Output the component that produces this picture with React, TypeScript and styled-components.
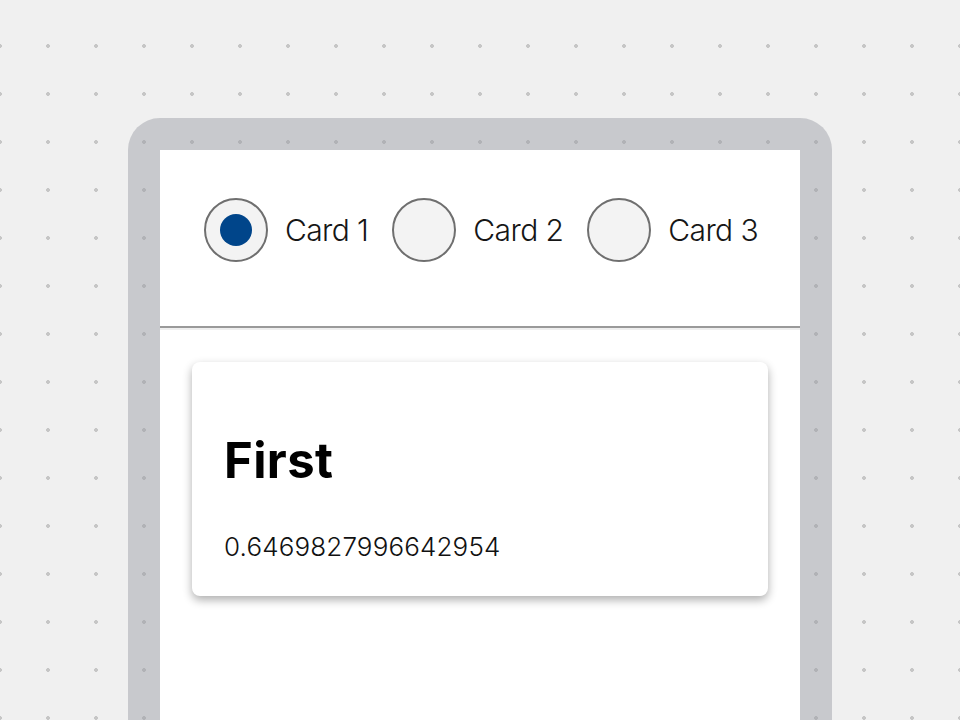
import React, { useState } from "react";
import styled, { createGlobalStyle } from "styled-components";

const Global = createGlobalStyle`
  html, body {
    margin: 0;
    padding: 0;
    height: 100%;
  }
  body {
    overflow: hidden;
    background-color: #f0f0f0;
    background-image: radial-gradient(circle, #c6c6c6 1.6px, transparent 2.2px);
    background-size: 48px 48px;
    background-position: -24px 22px;
    font-family: Inter, "Open Sans", sans-serif;
  }
`;

const Frame = styled.div`
  box-sizing: border-box;
  width: 704px;
  height: 602px;
  margin: 118px auto 0;
  padding: 32px 32px 0;
  border-radius: 32px 32px 0 0;
  background: rgba(150, 152, 162, 0.45);
`;

const Panel = styled.div`
  background: #ffffff;
  height: 100%;
  display: flex;
  flex-direction: column;
`;

const TabBar = styled.div`
  display: flex;
  align-items: center;
  height: 178px;
  flex-shrink: 0;
  box-sizing: border-box;
  padding: 0 0 16px 44px;
  border-bottom: 2px solid #9a9a9a;
  box-shadow: 0 2px 0 #efefef;
  gap: 24px;
`;

const Option = styled.label`
  display: flex;
  align-items: center;
  gap: 17px;
  cursor: pointer;
`;

const Circle = styled.span<{ $checked: boolean }>`
  box-sizing: border-box;
  width: 64px;
  height: 64px;
  border-radius: 50%;
  border: 2px solid #6f6f6f;
  background: #f3f3f3;
  display: flex;
  align-items: center;
  justify-content: center;
  &::after {
    content: "";
    width: 32px;
    height: 32px;
    border-radius: 50%;
    background: #00458a;
    display: ${(p) => (p.$checked ? "block" : "none")};
  }
`;

const Label = styled.span`
  font-size: 30px;
  font-weight: 300;
  color: #161616;
  letter-spacing: -0.6px;
  line-height: 40px;
`;

const Content = styled.div`
  padding: 34px 32px 0;
`;

const Card = styled.div`
  background: #fff;
  border-radius: 8px;
  box-shadow: 0 4px 10px rgba(0, 0, 0, 0.32);
  padding: 71px 32px 32px;
  height: 234px;
  box-sizing: border-box;
`;

const Title = styled.h2`
  margin: 0;
  font-size: 49px;
  line-height: 56px;
  font-weight: 700;
  color: #000;
  letter-spacing: 0.4px;
`;

const Value = styled.p`
  margin: 42px 0 0;
  font-size: 26px;
  line-height: 32px;
  color: #111;
  font-weight: 300;
  letter-spacing: 0.15px;
`;

const cards = [
  { id: 1, title: "First", value: "0.6469827996642954" },
  { id: 2, title: "Second", value: "0.2311650812457781" },
  { id: 3, title: "Third", value: "0.8840312260971123" },
];

export default function App() {
  const [sel, setSel] = useState(1);
  const current = cards.find((c) => c.id === sel)!;
  return (
    <>
      <Global />
      <Frame>
        <Panel>
          <TabBar>
            {cards.map((c) => (
              <Option key={c.id} onClick={() => setSel(c.id)}>
                <Circle $checked={sel === c.id} />
                <Label>Card {c.id}</Label>
              </Option>
            ))}
          </TabBar>
          <Content>
            <Card>
              <Title>{current.title}</Title>
              <Value>{current.value}</Value>
            </Card>
          </Content>
        </Panel>
      </Frame>
    </>
  );
}
